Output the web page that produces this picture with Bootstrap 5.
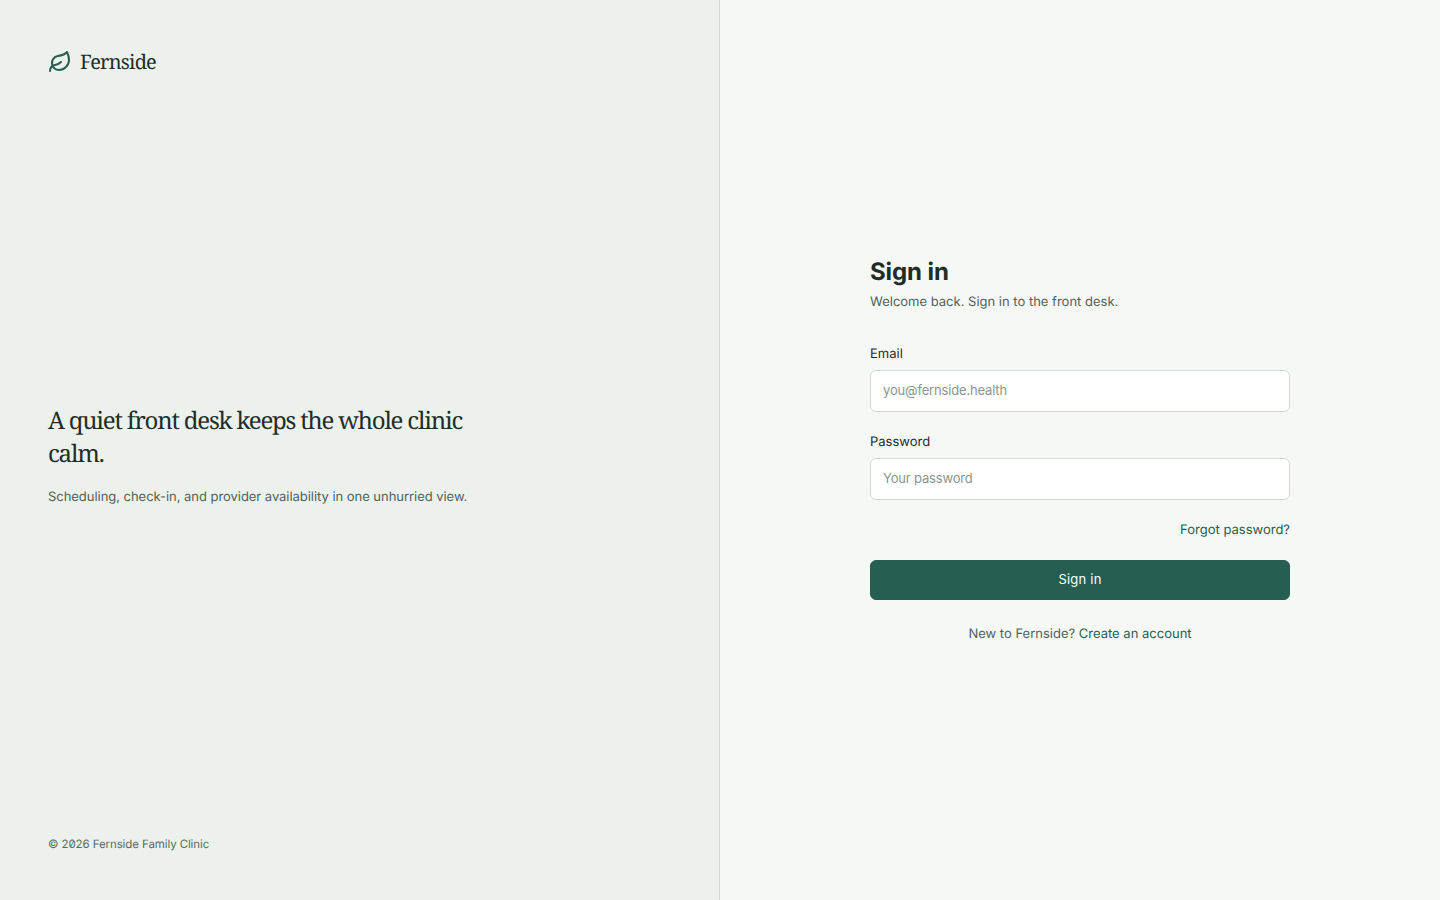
<!DOCTYPE html>
<html lang="en">
<head>
<meta charset="utf-8">
<title>Fernside - Sign in</title>
<link href="https://cdn.jsdelivr.net/npm/bootstrap@5.3.0/dist/css/bootstrap.min.css" rel="stylesheet">
<style>
html,body{height:100%}
body{background:#f6f8f5;font-family:Inter,"Noto Sans",sans-serif;color:#1f2d29;text-rendering:geometricPrecision}
.brand-pane{width:720px;height:900px;background:#ecf1ec;border-right:1px solid #d3d8d4;padding:48px}
.form-pane{width:720px;height:900px}
.brand-name{font-family:"Noto Serif","DejaVu Serif Condensed",serif;font-size:20px;line-height:28px;letter-spacing:-.8px;color:#1f2d29}
.brand-leaf{width:24px;height:24px;color:#265e52}
.tagline{font-family:"Noto Serif","DejaVu Serif Condensed",serif;font-size:24px;line-height:33px;letter-spacing:-1.2px;font-weight:400;width:430px;color:#1f2d29;margin:-1px 0 18px}
.subline{font-size:13px;line-height:20px;color:#51625c;letter-spacing:-.04px;margin:-1px 0 0}
.copy{font-size:11.5px;line-height:16px;color:#5a6a64;letter-spacing:-.1px;font-feature-settings:"zero"}
.signin-box{width:420px}
.signin-title{font-family:Inter,sans-serif;font-size:24px;line-height:30px;font-weight:700;letter-spacing:-.1px;color:#1f2d29;margin:0 0 4px}
.signin-sub{font-size:13px;line-height:22px;color:#51625c;margin:0 0 30px}
.field-label{font-size:13px;line-height:22px;color:#1f2d29;margin:0 0 5px;display:block}
.field-input{height:42px;border:1px solid #d3d8d4;border-radius:6px;font-size:13px;padding:0 12px 2px;background:#fff;color:#1f2d29}
.field-input::placeholder{color:#8b9692;letter-spacing:-.17px}
.field-wrap{margin-bottom:19px}
.green-link{color:#265e52;text-decoration:none;font-size:13px;line-height:22px}
.forgot-row{margin:0 0 19px}
.submit-btn{height:40px;background:#265e52;border:1px solid #265e52;color:#fff;font-size:13px;border-radius:6px;letter-spacing:.2px}
.foot-line{font-size:13px;line-height:22px;color:#51625c;margin:23px 0 -2px}
</style>
</head>
<body>
<div class="d-flex">
  <aside class="brand-pane d-flex flex-column justify-content-between">
    <div class="d-flex align-items-center gap-2 brand-row">
      <svg class="brand-leaf" viewBox="0 0 24 24" fill="none" stroke="currentColor" stroke-width="2" stroke-linecap="round" stroke-linejoin="round"><path d="M11 20A7 7 0 0 1 9.8 6.1C15.5 5 17 4.48 19 2c1 2 2 4.18 2 8 0 5.5-4.78 10-10 10Z"/><path d="M2 21c0-3 1.85-5.36 5.08-6C9.5 14.52 12 13 13 12"/></svg>
      <span class="brand-name">Fernside</span>
    </div>
    <div>
      <h2 class="tagline">A quiet front desk keeps the whole clinic calm.</h2>
      <p class="subline">Scheduling, check-in, and provider availability in one unhurried view.</p>
    </div>
    <div class="copy">© 2026 Fernside Family Clinic</div>
  </aside>
  <main class="form-pane d-flex align-items-center justify-content-center">
    <div class="signin-box">
      <h1 class="signin-title">Sign in</h1>
      <p class="signin-sub">Welcome back. Sign in to the front desk.</p>
      <form>
        <div class="field-wrap">
          <label class="field-label" for="em">Email</label>
          <input id="em" type="email" class="form-control field-input" placeholder="you@fernside.health">
        </div>
        <div class="field-wrap">
          <label class="field-label" for="pw">Password</label>
          <input id="pw" type="password" class="form-control field-input" placeholder="Your password">
        </div>
        <div class="d-flex justify-content-end forgot-row"><a href="#" class="green-link">Forgot password?</a></div>
        <button type="button" class="btn w-100 submit-btn">Sign in</button>
      </form>
      <p class="foot-line text-center">New to Fernside? <a href="#" class="green-link">Create an account</a></p>
    </div>
  </main>
</div>
<script src="https://cdn.jsdelivr.net/npm/bootstrap@5.3.0/dist/js/bootstrap.bundle.min.js"></script>
</body>
</html>
